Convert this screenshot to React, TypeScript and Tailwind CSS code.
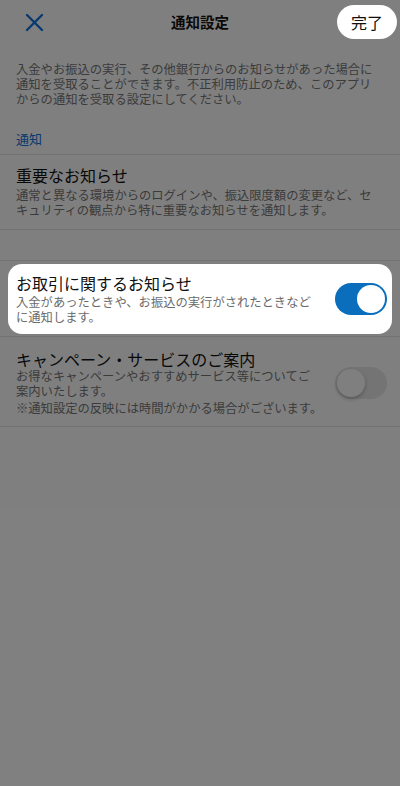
import React from "react";

const Toggle: React.FC<{ on: boolean }> = ({ on }) => (
  <div
    className={
      on
        ? "relative h-[32px] w-[52px] shrink-0 rounded-full bg-[#0a6ebd]"
        : "relative h-[32px] w-[52px] shrink-0 rounded-full bg-[#e9e9eb]"
    }
  >
    <div
      className={
        on
          ? "absolute right-[2px] top-[2px] h-[28px] w-[28px] rounded-full bg-white"
          : "absolute left-[2px] top-[2px] h-[28px] w-[28px] rounded-full bg-white shadow-[0_2px_4px_rgba(0,0,0,0.25)]"
      }
    />
  </div>
);

const App: React.FC = () => {
  return (
    <div className="relative min-h-[786px] bg-white font-['Noto_Sans_CJK_JP',sans-serif] text-[#111] antialiased">
      {/* dimming layer, highlighted parts sit above it */}
      <div className="absolute inset-0 z-10 bg-black/50" />

      <header className="grid h-[44px] grid-cols-[1fr_auto_1fr] items-center">
        <div className="pl-[25px]">
          <svg width="19" height="19" viewBox="0 0 19 19" fill="none">
            <path d="M2 2L17 17M17 2L2 17" stroke="#0f74e0" strokeWidth="2.4" strokeLinecap="round" />
          </svg>
        </div>
        <h1 className="text-[14.5px] font-bold leading-[20px]">通知設定</h1>
        <div className="flex justify-end pr-[3px]">
          <button className="relative z-20 flex h-[34px] w-[60px] items-center justify-center rounded-full bg-white text-[16px] leading-[20px] text-[#111]">
            完了
          </button>
        </div>
      </header>

      <p className="whitespace-nowrap px-4 pt-[18px] text-[12.3px] leading-[15px] text-[#777]">
        入金やお振込の実行、その他銀行からのお知らせがあった場合に
        <br />
        通知を受取ることができます。不正利用防止のため、このアプリ
        <br />
        からの通知を受取る設定にしてください。
      </p>

      <div className="border-b border-[#e4e4e4] px-4 pb-[5px] pt-[22px] text-[13px] leading-[20px] text-[#0f74e0]">
        通知
      </div>

      <div className="flex flex-col gap-[3px] border-b border-[#e4e4e4] px-4 pb-[11px] pt-[10px]">
        <div className="text-[16px] leading-[20px]">重要なお知らせ</div>
        <p className="whitespace-nowrap text-[12.3px] leading-[15px] text-[#777]">
          通常と異なる環境からのログインや、振込限度額の変更など、セ
          <br />
          キュリティの観点から特に重要なお知らせを通知します。
        </p>
      </div>

      <div className="h-[31px] border-b border-[#e4e4e4]" />

      <div className="border-b border-[#e4e4e4] px-2 pb-[2px] pt-[3px]">
        <div className="relative z-20 flex items-center justify-between rounded-[14px] bg-white pb-[9px] pl-2 pr-[5px] pt-[9px]">
          <div className="flex flex-col gap-[2px]">
            <div className="text-[16px] leading-[20px]">お取引に関するお知らせ</div>
            <p className="whitespace-nowrap text-[12.3px] leading-[15px] text-[#6b6b6b]">
              入金があったときや、お振込の実行がされたときなど
              <br />
              に通知します。
            </p>
          </div>
          <Toggle on />
        </div>
      </div>

      <div className="flex items-center justify-between border-b border-[#e4e4e4] pb-[10px] pl-4 pr-[13px] pt-[12px]">
        <div className="flex flex-col">
          <div className="text-[16px] leading-[20px]">キャンペーン・サービスのご案内</div>
          <p className="whitespace-nowrap text-[12.3px] leading-[15px] text-[#777]">
            お得なキャンペーンやおすすめサービス等についてご
            <br />
            案内いたします。
          </p>
          <p className="mt-[2px] whitespace-nowrap text-[12.3px] leading-[15px] text-[#777]">
            ※通知設定の反映には時間がかかる場合がございます。
          </p>
        </div>
        <Toggle on={false} />
      </div>
    </div>
  );
};

export default App;
